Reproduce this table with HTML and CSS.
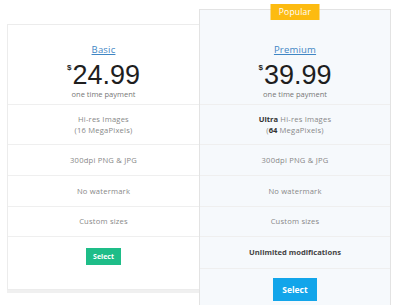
FILE: index.html
```html
<!DOCTYPE html>
<html>
<head>
<meta charset="utf-8">
<link rel="stylesheet" href="styles.css">
</head>
<body>
<div class="plans">
  <div class="card basic">
    <div class="head">
      <a class="title" href="#">Basic</a>
      <div class="price"><span class="cur">$</span>24.99</div>
      <div class="sub">one time payment</div>
    </div>
    <div class="row r1">Hi-res Images<br>(16 MegaPixels)</div>
    <div class="row r2">300dpi PNG &amp; JPG</div>
    <div class="row r3">No watermark</div>
    <div class="row r4">Custom sizes</div>
    <div class="foot"><button class="btn green">Select</button></div>
  </div>
  <div class="card premium">
    <div class="badge">Popular</div>
    <div class="head">
      <a class="title" href="#">Premium</a>
      <div class="price"><span class="cur">$</span>39.99</div>
      <div class="sub">one time payment</div>
    </div>
    <div class="row r1"><span><b>Ultra</b> Hi-res Images<br>(<b>64</b> MegaPixels)</span></div>
    <div class="row r2">300dpi PNG &amp; JPG</div>
    <div class="row r3">No watermark</div>
    <div class="row r4">Custom sizes</div>
    <div class="row r5 strong">Unlimited modifications</div>
    <div class="foot"><button class="btn blue">Select</button></div>
  </div>
</div>
</body>
</html>
```

FILE: styles.css
```css
html, body {
  margin: 0;
  padding: 0;
  background: #fff;
}
body {
  font-family: "Open Sans", "Liberation Sans", sans-serif;
  width: 400px;
  height: 305px;
  overflow: hidden;
}
.plans {
  display: flex;
  align-items: flex-start;
  padding: 9px 0 0 7px;
}
.card {
  position: relative;
  display: flex;
  flex-direction: column;
  text-align: center;
  box-sizing: border-box;
  border: 1px solid #ececec;
}
.basic {
  width: 193px;
  margin-top: 15px;
  background: #fff;
  box-shadow: 0 3px 0 #f0f0f0;
}
.premium {
  width: 192px;
  margin-left: -1px;
  background: #f6f9fc;
  border-color: #e3e3e3;
  z-index: 1;
  padding-top: 15px;
  height: 310px;
}
.badge {
  position: absolute;
  top: -6px;
  left: 50%;
  transform: translateX(-50%);
  width: 49px;
  height: 16px;
  line-height: 16px;
  background: #fdbb10;
  color: #fff;
  font-size: 8.5px;
  letter-spacing: 0.2px;
}
.head {
  padding: 19px 0 5px;
  border-bottom: 1px solid #efefef;
  display: flex;
  flex-direction: column;
  align-items: center;
}
.title {
  font-size: 9.5px;
  line-height: 12px;
  color: #3f86c4;
  text-decoration: underline;
  margin-bottom: 5px;
  letter-spacing: 0.2px;
}
.price {
  font-family: "Liberation Sans", Arial, sans-serif;
  font-size: 27px;
  line-height: 28px;
  color: #1e1e1e;
  position: relative;
}
.cur {
  font-size: 8px;
  font-weight: bold;
  vertical-align: top;
  line-height: 14px;
  margin-right: 1px;
}
.sub {
  font-size: 7.5px;
  line-height: 10px;
  color: #777;
}
.row {
  display: flex;
  align-items: center;
  justify-content: center;
  font-size: 7.6px;
  letter-spacing: 0.2px;
  line-height: 11px;
  color: #888;
  border-bottom: 1px solid #efefef;
  box-sizing: border-box;
}
.row b {
  color: #333;
  letter-spacing: 0;
}
.r1 { height: 40px; }
.r2 { height: 31px; }
.r3 { height: 31px; }
.r4 { height: 30px; }
.r5 { height: 32px; }
.strong {
  font-weight: bold;
  color: #444;
  letter-spacing: 0;
}
.basic .foot {
  height: 52px;
}
.foot {
  display: flex;
  justify-content: center;
  align-items: flex-start;
}
.btn {
  border: none;
  color: #fff;
  font-family: "Open Sans", "Liberation Sans", sans-serif;
  font-weight: bold;
  padding: 0;
}
.green {
  background: #1ebd88;
  width: 35px;
  height: 17px;
  font-size: 7px;
  margin-top: 11px;
}
.blue {
  background: #12a5ea;
  width: 44px;
  height: 23px;
  font-size: 8.5px;
  margin-top: 9px;
}
```
